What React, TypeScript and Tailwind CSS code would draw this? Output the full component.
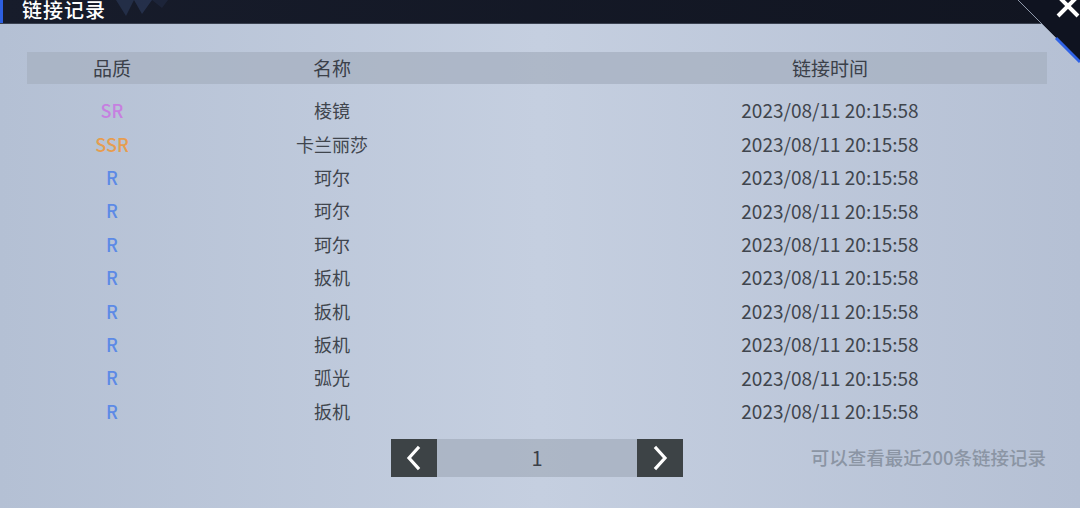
import React from 'react';

type Row = { quality: 'SR' | 'SSR' | 'R'; name: string; time: string };

const rows: Row[] = [
  { quality: 'SR', name: '棱镜', time: '2023/08/11 20:15:58' },
  { quality: 'SSR', name: '卡兰丽莎', time: '2023/08/11 20:15:58' },
  { quality: 'R', name: '珂尔', time: '2023/08/11 20:15:58' },
  { quality: 'R', name: '珂尔', time: '2023/08/11 20:15:58' },
  { quality: 'R', name: '珂尔', time: '2023/08/11 20:15:58' },
  { quality: 'R', name: '扳机', time: '2023/08/11 20:15:58' },
  { quality: 'R', name: '扳机', time: '2023/08/11 20:15:58' },
  { quality: 'R', name: '扳机', time: '2023/08/11 20:15:58' },
  { quality: 'R', name: '弧光', time: '2023/08/11 20:15:58' },
  { quality: 'R', name: '扳机', time: '2023/08/11 20:15:58' },
];

const qualityColor: Record<Row['quality'], string> = {
  SR: 'text-[#c67fe0]',
  SSR: 'text-[#e69d4f]',
  R: 'text-[#5c8ae6]',
};

function Chevron({ dir }: { dir: 'left' | 'right' }) {
  return (
    <svg width="22" height="26" viewBox="0 0 22 26" fill="none">
      <path
        d={dir === 'left' ? 'M15 3 L6 13 L15 23' : 'M7 3 L16 13 L7 23'}
        stroke="white"
        strokeWidth="3.2"
        strokeLinecap="square"
      />
    </svg>
  );
}

export default function App() {
  return (
    <div
      className="relative w-[1080px] h-[508px] overflow-hidden bg-gradient-to-r from-[#b4c0d4] via-[#c5cfe0] to-[#b5c0d4]"
      style={{ fontFamily: '"Noto Sans CJK SC", "Noto Sans", sans-serif' }}
    >
      {/* Title bar */}
      <div className="relative h-[24px] bg-gradient-to-r from-[#171c2b] to-[#111521] flex items-center border-b border-[#3a4150]">
        <div className="w-[3px] h-full bg-[#2d5fe0]" />
        <span className="ml-[19px] -mt-[3px] text-[20px] leading-[24px] font-medium text-white tracking-[1px]">链接记录</span>
        <svg className="ml-[6px]" width="80" height="24" viewBox="0 0 80 24">
          <polygon points="4,0 22,0 14,16" fill="#2a3654" opacity="0.7" />
          <polygon points="22,0 40,0 30,14" fill="#2f3d60" opacity="0.6" />
          <polygon points="40,0 56,0 50,8" fill="#222c44" opacity="0.6" />
        </svg>
      </div>

      {/* top-right chamfered corner */}
      <svg className="absolute right-0 top-0" width="70" height="70" viewBox="0 0 70 70">
        <polygon points="8,0 70,0 70,62" fill="#0f1320" />
        <line x1="8" y1="0" x2="70" y2="62" stroke="#8e98aa" strokeWidth="1" />
        <line x1="46" y1="38" x2="70" y2="62" stroke="#2f62e6" strokeWidth="3" />
        <path d="M48 -4 L68 16 M68 -4 L48 16" stroke="white" strokeWidth="4" />
      </svg>

      {/* Table */}
      <div className="mx-[27px] mt-[28px] w-[1020px]">
        <div className="grid grid-cols-[170px_270px_146px_434px] h-[32px] items-center bg-[#a7b1c2]/80 text-[19px] text-[#3b4049]">
          <div className="text-center">品质</div>
          <div className="text-center">名称</div>
          <div />
          <div className="text-center">链接时间</div>
        </div>
        <div className="mt-[10px]">
          {rows.map((r, i) => (
            <div
              key={i}
              className="grid grid-cols-[170px_270px_146px_434px] h-[33.4px] items-center text-[18px] text-[#40454d]"
            >
              <div className={`text-center font-medium ${qualityColor[r.quality]}`}>{r.quality}</div>
              <div className="text-center">{r.name}</div>
              <div />
              <div className="text-center text-[19px]">{r.time}</div>
            </div>
          ))}
        </div>
      </div>

      {/* Footer */}
      <div className="flex items-center mt-[11px]">
        <div className="ml-[391px] flex h-[38px]">
          <button className="w-[46px] h-full bg-[#3d4346] flex items-center justify-center">
            <Chevron dir="left" />
          </button>
          <div className="w-[200px] h-full bg-[#a6b0bf]/80 flex items-center justify-center text-[20px] text-[#3b4049]">1</div>
          <button className="w-[46px] h-full bg-[#3d4346] flex items-center justify-center">
            <Chevron dir="right" />
          </button>
        </div>
        <div className="ml-auto mr-[34px] text-[18.5px] font-medium text-[#8b95a4]">可以查看最近200条链接记录</div>
      </div>
    </div>
  );
}
